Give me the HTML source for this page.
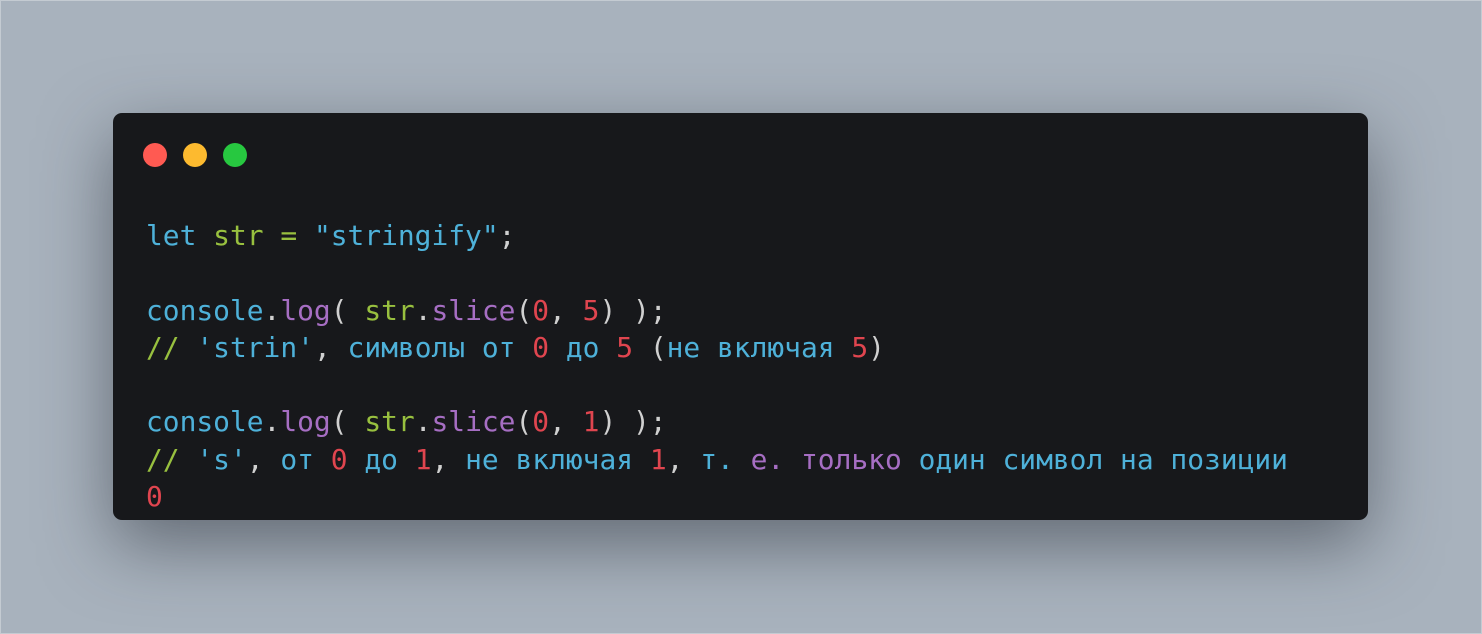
<!DOCTYPE html>
<html><head><meta charset="utf-8"><style>
html,body{margin:0;padding:0}
body{width:1482px;height:634px;overflow:hidden;background:#a8b2bd;position:relative;font-family:"DejaVu Sans Mono","Liberation Mono",monospace}
.frame{position:absolute;left:0;top:0;width:1480px;height:632px;border:1px solid #c4cbd2;background:#a8b2bd}
.card{position:absolute;left:113px;top:113px;width:1255px;height:407px;background:#17181b;border-radius:9px;box-shadow:0 24px 70px rgba(40,45,55,0.55)}
.dot{position:absolute;top:143px;width:24px;height:24px;border-radius:50%}
pre{position:absolute;left:146px;top:217px;margin:0;font-family:"DejaVu Sans Mono","Liberation Mono",monospace;font-size:27.9px;line-height:37.3px;color:#cfcfcf}
.b{color:#4eb1d9}.g{color:#98c03f}.p{color:#a66ec3}.r{color:#e0454f}.w{color:#d0d0d0}
</style></head><body>
<div class="frame"></div>
<div class="card"></div>
<div class="dot" style="left:143px;background:#ff5a52"></div>
<div class="dot" style="left:183px;background:#fdba2f"></div>
<div class="dot" style="left:223px;background:#27c840"></div>
<pre><span class="b">let</span> <span class="g">str</span> <span class="g">=</span> <span class="b">"stringify"</span><span class="w">;</span>

<span class="b">console</span><span class="w">.</span><span class="p">log</span><span class="w">(</span> <span class="g">str</span><span class="w">.</span><span class="p">slice</span><span class="w">(</span><span class="r">0</span><span class="w">,</span> <span class="r">5</span><span class="w">) );</span>
<span class="g">//</span> <span class="b">'strin'</span><span class="w">,</span> <span class="b">символы от</span> <span class="r">0</span> <span class="b">до</span> <span class="r">5</span> <span class="w">(</span><span class="b">не включая</span> <span class="r">5</span><span class="w">)</span>

<span class="b">console</span><span class="w">.</span><span class="p">log</span><span class="w">(</span> <span class="g">str</span><span class="w">.</span><span class="p">slice</span><span class="w">(</span><span class="r">0</span><span class="w">,</span> <span class="r">1</span><span class="w">) );</span>
<span class="g">//</span> <span class="b">'s'</span><span class="w">,</span> <span class="b">от</span> <span class="r">0</span> <span class="b">до</span> <span class="r">1</span><span class="w">,</span> <span class="b">не включая</span> <span class="r">1</span><span class="w">,</span> <span class="b">т.</span> <span class="p">е.</span> <span class="p">только</span> <span class="b">один символ на позиции</span>
<span class="r">0</span></pre>
</body></html>
